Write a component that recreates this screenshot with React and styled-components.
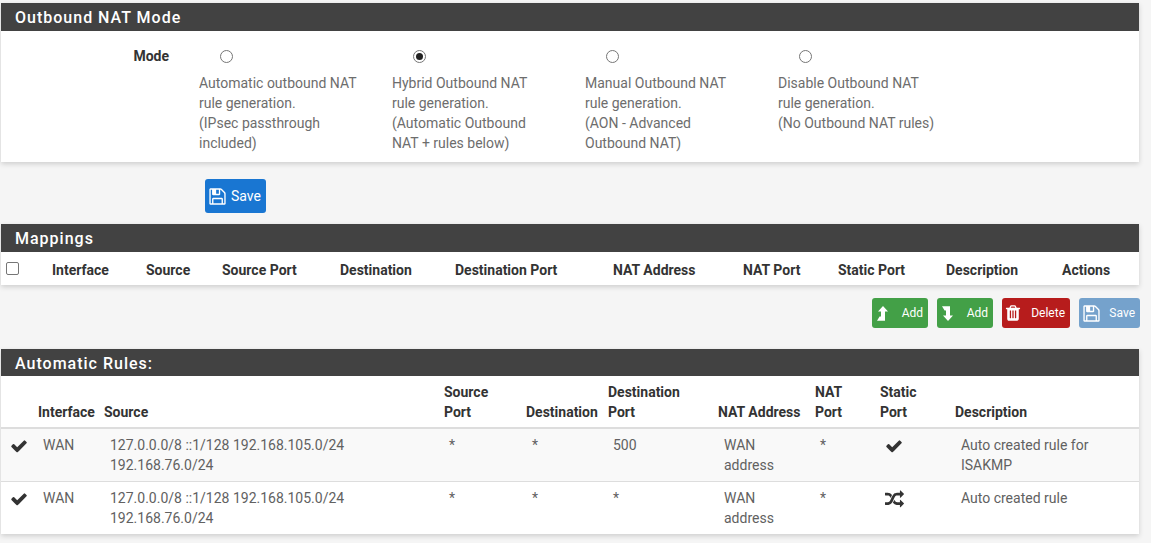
import styled, { createGlobalStyle } from 'styled-components';

const GlobalStyle = createGlobalStyle`
  * { box-sizing: border-box; }
  html, body { margin: 0; background: #f5f5f5; }
  body {
    font-family: Roboto, "Liberation Sans", sans-serif;
    font-size: 14px;
    line-height: 20px;
    color: #212121;
    overflow: hidden;
  }
`;

const Page = styled.div`
  width: 1151px;
  height: 543px;
  padding: 3px 12px 0 1px;
  overflow: hidden;
`;

const Panel = styled.section`
  background: #fff;
  box-shadow: 0 2px 5px rgba(0, 0, 0, 0.16);
`;

const PanelHeading = styled.h2`
  margin: 0;
  height: ${props => props.$h || 28}px;
  padding-left: 14px;
  background: #424242;
  color: #fff;
  font-size: 16px;
  font-weight: 500;
  line-height: 29px;
  letter-spacing: 1px;
`;

const ModeBody = styled.div`
  display: flex;
  height: 131px;
  padding-top: 15px;
`;

const ModeLabel = styled.div`
  width: 168px;
  text-align: right;
  font-weight: 700;
  color: #333;
  line-height: 20px;
`;

const ModeOptions = styled.div`
  display: flex;
  margin-left: 30px;
`;

const ModeOption = styled.label`
  display: block;
  width: 193px;
  padding-right: 30px;
  color: #6d6d6d;
  line-height: 20px;
`;

const RadioCircle = styled.span`
  display: flex;
  align-items: center;
  justify-content: center;
  width: 13px;
  height: 13px;
  margin: 4px 0 10px 21px;
  border: 1px solid #767676;
  border-radius: 50%;
  background: #fff;

  &::after {
    content: '';
    display: ${props => (props.$checked ? 'block' : 'none')};
    width: 7px;
    height: 7px;
    border-radius: 50%;
    background: #222;
  }
`;

const ButtonRow = styled.div`
  display: flex;
  justify-content: ${props => props.$end ? 'flex-end' : 'flex-start'};
  gap: ${props => props.$end ? '9px' : '0'};
  padding-left: ${props => props.$end ? '0' : '204px'};
  margin-top: ${props => props.$end ? '13px' : '17px'};
  margin-bottom: ${props => props.$end ? '21px' : '11px'};
  margin-right: ${props => props.$end ? '-1px' : '0'};
`;

const Button = styled.button`
  display: flex;
  align-items: center;
  justify-content: space-between;
  height: ${props => props.$large ? '34px' : '30px'};
  width: ${props => props.$width}px;
  padding: 0 5px;
  border: 0;
  border-radius: 3px;
  background: ${props => props.$bg};
  color: #fff;
  font-family: inherit;
  font-size: ${props => props.$large ? '14px' : '12px'};
  line-height: 1;
`;

const Icon = styled.svg`
  display: block;
  flex: none;
  fill: currentColor;
  margin-left: ${props => props.$ml || 0}px;
  transform: ${props => props.$flip ? 'scaleY(-1)' : 'none'};
`;

const TableWrap = styled.table`
  width: 100%;
  border-collapse: collapse;
  table-layout: fixed;
`;

const HeadCell = styled.th`
  padding: ${props => props.$pad || '0'};
  text-align: left;
  vertical-align: bottom;
  font-weight: 700;
  color: #333;
  line-height: 20px;
`;

const CheckHead = styled(HeadCell)`
  vertical-align: top;
  padding-top: 10px;
`;

const MappingHead = styled.tr`
  height: 33px;
`;

const RulesHead = styled.tr`
  height: 52px;
  border-bottom: 2px solid #ddd;

  ${HeadCell} { padding-bottom: 5px; }
`;

const Row = styled.tr`
  height: ${props => props.$h}px;
  background: ${props => props.$shade ? '#f9f9f9' : '#fff'};
  border-bottom: ${props => props.$shade ? '1px solid #ddd' : '0'};
`;

const Cell = styled.td`
  padding: 6px 4px 5px ${props => props.$left || 5}px;
  vertical-align: top;
  color: #616161;
  line-height: 20px;
  overflow: hidden;
`;

const IconCell = styled(Cell)`
  color: #333;
  svg { margin-top: 2px; }
`;

const Checkbox = styled.span`
  display: block;
  width: 13px;
  height: 13px;
  margin-left: 5px;
  border: 1px solid #767676;
  border-radius: 2px;
  background: #fff;
`;

const CheckIcon = () => (
  <Icon width={18} height={18} viewBox="0 0 1792 1792">
    <path d="M1671 566q0 40-28 68l-724 724-136 136q-28 28-68 28t-68-28l-136-136-362-362q-28-28-28-68t28-68l136-136q28-28 68-28t68 28l294 295 656-657q28-28 68-28t68 28l136 136q28 28 28 68z" />
  </Icon>
);

const RandomIcon = () => (
  <Icon width={19} height={19} viewBox="0 0 1792 1792">
    <path d="M666 481q-60 92-137 273-22-45-37-72.500t-40.500-63.500-51-56.500-63-35-81.500-14.500h-224q-14 0-23-9t-9-23v-192q0-14 9-23t23-9h224q250 0 410 225zm1126 799q0 14-9 23l-320 320q-9 9-23 9-13 0-22.500-9.500t-9.500-22.500v-192q-32 0-85 .5t-81 1-73-1-71-5-64-10.500-63-18.500-58-28.500-59-40-55-53.500-56-69.500q59-93 136-273 22 45 37 72.500t40.500 63.500 51 56.500 63 35 81.500 14.500h256v-192q0-14 9-23t23-9q12 0 24 10l319 319q9 9 9 23zm0-896q0 14-9 23l-320 320q-9 9-23 9-13 0-22.500-9.500t-9.500-22.500v-192h-256q-48 0-87 15t-69 45-51 61.500-45 77.500q-32 62-78 171-29 66-49.500 111t-54 105-64 100-74 83-90 68.500-106.500 42-128 16.500h-224q-14 0-23-9t-9-23v-192q0-14 9-23t23-9h224q48 0 87-15t69-45 51-61.500 45-77.500q32-62 78-171 29-66 49.500-111t54-105 64-100 74-83 90-68.500 106.500-42 128-16.500h256v-192q0-14 9-23t23-9q12 0 24 10l319 319q9 9 9 23z" />
  </Icon>
);

const SaveIcon = () => (
  <Icon $ml={-2} width={19} height={19} viewBox="0 0 1792 1792">
    <path d="M512 1536h768v-384h-768v384zm896 0h128v-896q0-14-10-38.500t-20-34.500l-281-281q-10-10-34-20t-39-10v416q0 40-28 68t-68 28h-576q-40 0-68-28t-28-68v-416h-128v1280h128v-416q0-40 28-68t68-28h832q40 0 68 28t28 68v416zm-384-928v-320q0-13-9.500-22.500t-22.500-9.500h-192q-13 0-22.500 9.500t-9.500 22.500v320q0 13 9.500 22.500t22.500 9.500h192q13 0 22.500-9.500t9.500-22.500zm640 32v928q0 40-28 68t-68 28h-1344q-40 0-68-28t-28-68v-1344q0-40 28-68t68-28h928q40 0 88 20t76 48l280 280q28 28 48 76t20 88z" />
  </Icon>
);

const TrashIcon = () => (
  <Icon $ml={-3} width={18} height={18} viewBox="0 0 1792 1792">
    <path d="M704 1376v-704q0-14-9-23t-23-9h-64q-14 0-23 9t-9 23v704q0 14 9 23t23 9h64q14 0 23-9t9-23zm256 0v-704q0-14-9-23t-23-9h-64q-14 0-23 9t-9 23v704q0 14 9 23t23 9h64q14 0 23-9t9-23zm256 0v-704q0-14-9-23t-23-9h-64q-14 0-23 9t-9 23v704q0 14 9 23t23 9h64q14 0 23-9t9-23zm-544-992h448l-48-117q-7-9-17-11h-317q-10 2-17 11zm928 32v64q0 14-9 23t-23 9h-96v948q0 83-47 143.500t-113 60.500h-832q-66 0-113-58.500t-47-141.500v-952h-96q-14 0-23-9t-9-23v-64q0-14 9-23t23-9h309l70-167q15-37 54-63t79-26h320q40 0 79 26t54 63l70 167h309q14 0 23 9t9 23z" />
  </Icon>
);

const LevelIcon = ({ down }) => (
  <Icon $flip={down} width={11} height={15} viewBox="0 0 11 15">
    <path d="M6 0L11 5.500H8V14.700H0L2.600 10.500H4V5.500H1Z" />
  </Icon>
);

const mappingCols = [51, 94, 76, 118, 115, 158, 130, 95, 108, 116, 77];
const mappingHeads = ['Interface', 'Source', 'Source Port', 'Destination', 'Destination Port', 'NAT Address', 'NAT Port', 'Static Port', 'Description', 'Actions'];

const ruleCols = [37, 66, 340, 82, 82, 110, 97, 65, 75, 184];

const modes = [
  { text: ['Automatic outbound NAT', 'rule generation.', '(IPsec passthrough', 'included)'] },
  { text: ['Hybrid Outbound NAT', 'rule generation.', '(Automatic Outbound', 'NAT + rules below)'], checked: true },
  { text: ['Manual Outbound NAT', 'rule generation.', '(AON - Advanced', 'Outbound NAT)'] },
  { text: ['Disable Outbound NAT', 'rule generation.', '(No Outbound NAT rules)'] },
];

const rules = [
  { port: '500', icon: <CheckIcon />, desc: 'Auto created rule for ISAKMP', h: 53, shade: true },
  { port: '*', icon: <RandomIcon />, desc: 'Auto created rule', h: 53 },
];

const App = () => (
  <Page>
    <GlobalStyle />
    <Panel>
      <PanelHeading>Outbound NAT Mode</PanelHeading>
      <ModeBody>
        <ModeLabel>Mode</ModeLabel>
        <ModeOptions>
          {modes.map((mode) => (
            <ModeOption key={mode.text[0]}>
              <RadioCircle $checked={mode.checked} />
              {mode.text.map((line) => <div key={line}>{line}</div>)}
            </ModeOption>
          ))}
        </ModeOptions>
      </ModeBody>
    </Panel>

    <ButtonRow>
      <Button $large $bg="#1976d2" $width={61}><SaveIcon /> Save</Button>
    </ButtonRow>

    <Panel>
      <PanelHeading>Mappings</PanelHeading>
      <TableWrap>
        <colgroup>
          {mappingCols.map((w, i) => <col key={i} style={{ width: w }} />)}
        </colgroup>
        <thead>
          <MappingHead>
            <CheckHead><Checkbox /></CheckHead>
            {mappingHeads.map((h) => (
              <HeadCell key={h} $pad="0 0 5px 0">{h}</HeadCell>
            ))}
          </MappingHead>
        </thead>
      </TableWrap>
    </Panel>

    <ButtonRow $end>
      <Button $bg="#43a047" $width={56}><LevelIcon /> Add</Button>
      <Button $bg="#43a047" $width={56}><LevelIcon down /> Add</Button>
      <Button $bg="#b71c1c" $width={68}><TrashIcon /> Delete</Button>
      <Button $bg="#75a2cc" $width={61}><SaveIcon /> Save</Button>
    </ButtonRow>

    <Panel>
      <PanelHeading $h={27}>Automatic Rules:</PanelHeading>
      <TableWrap>
        <colgroup>
          {ruleCols.map((w, i) => <col key={i} style={{ width: w }} />)}
        </colgroup>
        <thead>
          <RulesHead>
            <HeadCell />
            <HeadCell>Interface</HeadCell>
            <HeadCell>Source</HeadCell>
            <HeadCell>Source<br />Port</HeadCell>
            <HeadCell>Destination</HeadCell>
            <HeadCell>Destination<br />Port</HeadCell>
            <HeadCell>NAT Address</HeadCell>
            <HeadCell>NAT<br />Port</HeadCell>
            <HeadCell>Static<br />Port</HeadCell>
            <HeadCell>Description</HeadCell>
          </RulesHead>
        </thead>
        <tbody>
          {rules.map((rule) => (
            <Row key={rule.desc} $h={rule.h} $shade={rule.shade}>
              <IconCell $left={9}><CheckIcon /></IconCell>
              <Cell>WAN</Cell>
              <Cell $left={6}>127.0.0.0/8 ::1/128 192.168.105.0/24<br />192.168.76.0/24</Cell>
              <Cell>*</Cell>
              <Cell $left={6}>*</Cell>
              <Cell>{rule.port}</Cell>
              <Cell $left={6}>WAN<br />address</Cell>
              <Cell>*</Cell>
              <IconCell $left={5}>{rule.icon}</IconCell>
              <Cell $left={6}>{rule.desc}</Cell>
            </Row>
          ))}
        </tbody>
      </TableWrap>
    </Panel>
  </Page>
);

export default App;
